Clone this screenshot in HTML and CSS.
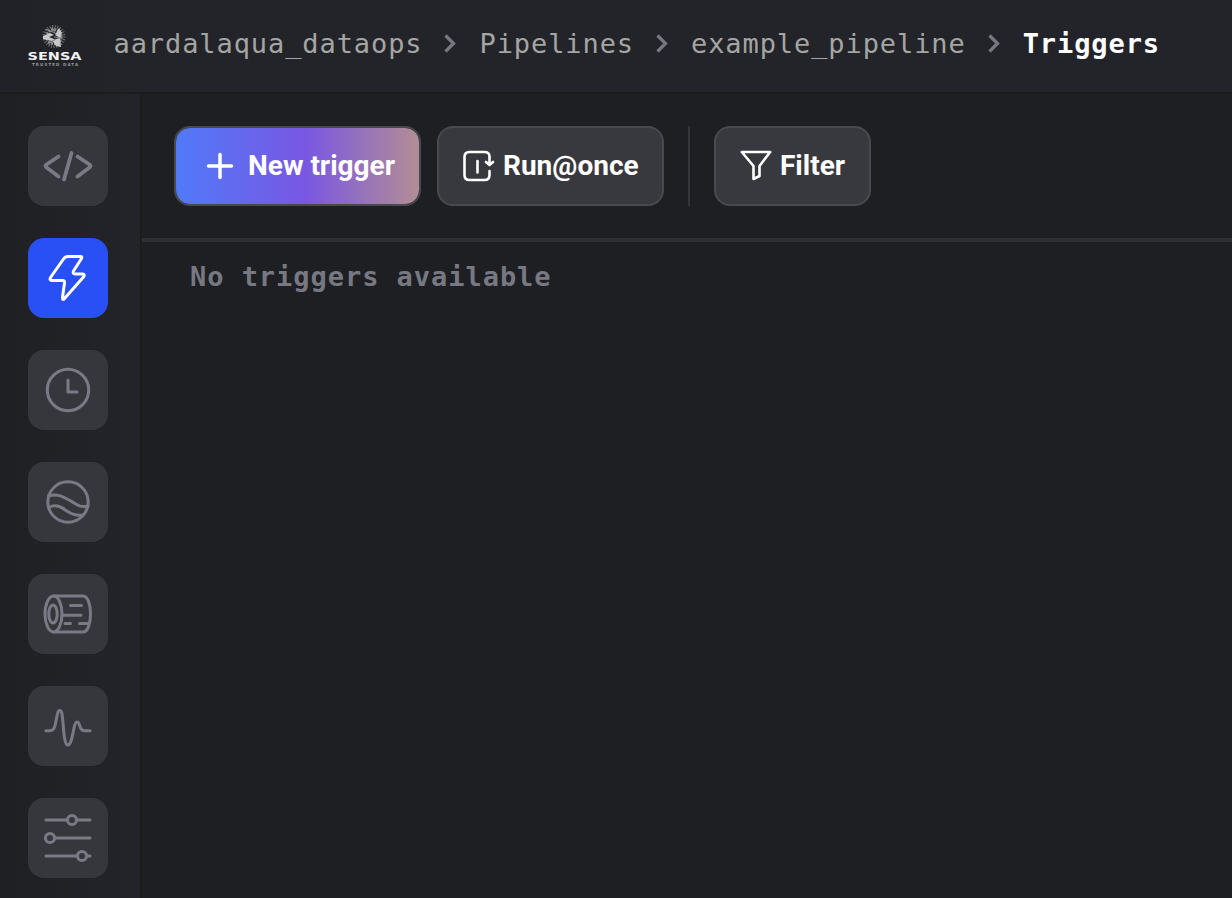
FILE: index.html
```html
<!DOCTYPE html>
<html lang="en">
<head>
<meta charset="utf-8">
<title>Triggers</title>
<link rel="stylesheet" href="styles.css">
</head>
<body>
<header class="topbar">
  <svg class="logo" width="56" height="44" viewBox="0 0 56 44" fill="none">
    <circle cx="26" cy="12.5" r="10" stroke="#6c6f72" stroke-width="3" stroke-dasharray="1 1.5"/>
    <circle cx="26" cy="12.5" r="7" stroke="#8f9193" stroke-width="3" stroke-dasharray="2 1"/>
    <path d="M15 12l7-3 4 2-5 2 5 2-2 2-9-2zM31 4l3 5-2 5-5-3zM24 16l8-2 1 9-5-1z" fill="#c6c7c7"/>
    <path d="M18 5l9 4M24 3l4 8M34 14l-8-1M20 20l8-5" stroke="#8b8d8f"/>
    <text x="-.5" y="35.5" class="logo-name" textLength="54" lengthAdjust="spacingAndGlyphs">SENSA</text>
    <text x="4" y="41.5" class="logo-tag" textLength="46" lengthAdjust="spacing">TRUSTED DATA</text>
  </svg>
  <nav class="crumbs">
    <span class="crumb">aardalaqua_dataops</span>
    <svg class="sep" width="57" height="24" viewBox="0 0 57 24"><path d="M23.500 3.500l8 8-8 8"/></svg>
    <span class="crumb">Pipelines</span>
    <svg class="sep" width="57" height="24" viewBox="0 0 57 24"><path d="M23.500 3.500l8 8-8 8"/></svg>
    <span class="crumb">example_pipeline</span>
    <svg class="sep" width="57" height="24" viewBox="0 0 57 24"><path d="M23.500 3.500l8 8-8 8"/></svg>
    <span class="crumb current">Triggers</span>
  </nav>
</header>
<div class="body">
  <aside class="sidebar">
    <a class="tile"><svg viewBox="0 0 80 80"><path d="M30.500 30.500L18.500 38.500Q16.500 40 18.500 41.500L30.500 50.500M49.500 30.500L61.500 38.500Q63.500 40 61.500 41.500L49.500 50.500M43.500 27L36 53.500"/></svg></a>
    <a class="tile active"><svg viewBox="0 0 80 80"><path d="M40 18.500H52.500Q54.500 18.500 53.500 20.500L45.500 33Q44.300 35.800 47 36H54.500Q57.500 36.300 55.500 39L36.500 60.500Q34.500 63 34.500 59.500L36.500 45Q37 42.500 34.500 42.500H24Q21 42 22.500 39.500L35.500 21Q37.200 18.500 40 18.500z"/></svg></a>
    <a class="tile"><svg viewBox="0 0 80 80"><circle cx="40" cy="40" r="20.700"/><path d="M40 30V42H49"/></svg></a>
    <a class="tile"><svg viewBox="0 0 80 80"><circle cx="40" cy="40" r="20.200"/><path d="M20.500 34C29 31 36 35 42 38.500C49 43 53 46 60 44M21 45.500C27 42 33 44.500 38 48.500C44 52.500 49 54 55 53"/></svg></a>
    <a class="tile"><svg viewBox="0 0 80 80"><ellipse cx="25.500" cy="40" rx="8.500" ry="18"/><ellipse cx="25" cy="40" rx="4.200" ry="9"/><path d="M25.500 22H55C60 22 62.500 31 62.500 40S60 58 55 58H25.500M42.500 31.500H53.500M34 41.300H53M37 49.500H42.500M51.500 49.500H60"/></svg></a>
    <a class="tile"><svg viewBox="0 0 80 80"><path d="M18 44.700H22C26 44.700 27 41 28 35C29.500 27 30 24.500 31.800 24.500C34 24.500 34.300 29 35 37C36 50 37 59 39.800 59C43 59 44.500 50 46 42C47 37 48 36 49.200 36C51 36 51.500 39 52.500 42C53.300 44 55 44.700 57 44.700H62"/></svg></a>
    <a class="tile"><svg viewBox="0 0 80 80"><path d="M18 22H39M49 22H62M27 40H62M18 58H49M59 58H62"/><circle cx="44" cy="22" r="4.600"/><circle cx="22" cy="40" r="4.600"/><circle cx="54" cy="58" r="4.600"/></svg></a>
  </aside>
  <main class="main">
    <div class="toolbar">
      <button class="btn primary"><svg width="28" height="28" viewBox="0 0 28 28"><path d="M14 2.500V25.500M2.500 14H25.500"/></svg><span>New trigger</span></button>
      <button class="btn run"><svg width="32" height="32" viewBox="0 0 32 32"><path d="M26.500 12.500V6.500Q26.500 2 21.500 2H6.500Q1.500 2 1.500 7V25Q1.500 30 6.500 30H21.500Q26.500 30 26.500 25V21M23 12l3.500 3 3.500-3M14.500 11V22.500"/></svg><span>Run@once</span></button>
      <i class="divider"></i>
      <button class="btn filter"><svg width="32" height="32" viewBox="0 0 32 32"><path d="M1.800 2H30.200L19.500 16V26L13.500 29V16z"/></svg><span>Filter</span></button>
    </div>
    <p class="empty">No triggers available</p>
  </main>
</div>
</body>
</html>
```
FILE: styles.css
```css
* { box-sizing: border-box; }
body {
  margin: 0;
  height: 898px;
  overflow: hidden;
  display: flex;
  flex-direction: column;
  background: #1e1f23;
  font-family: Roboto, sans-serif;
}
.topbar {
  height: 94px;
  flex: none;
  display: flex;
  align-items: flex-start;
  padding: 24px 0 0 28px;
  background: linear-gradient(90deg, #212227, #232429 140px);
  border-bottom: 2px solid #1b1c1e;
}
.logo { flex: none; margin-right: 29.500px; overflow: visible; }
.logo-name { font: 700 10px "DejaVu Sans", sans-serif; fill: #f2f2f2; }
.logo-tag { font: 700 4px "DejaVu Sans", sans-serif; fill: #97999b; }
.crumbs { display: flex; align-items: center; height: 40px; }
.crumb, .empty {
  font-family: "DejaVu Sans Mono", monospace;
  font-size: 27px;
  line-height: 40px;
  letter-spacing: .91px;
  white-space: pre;
}
.crumb { color: #a5a5a3; }
.current { color: #fff; font-weight: 700; }
.sep { flex: none; fill: none; stroke: #777882; stroke-width: 3.200; }
.body { flex: 1; display: flex; min-height: 0; }
.sidebar {
  width: 142px;
  flex: none;
  padding: 32px 0 0 28px;
  display: flex;
  flex-direction: column;
  gap: 32px;
  background: linear-gradient(90deg, #1f2024, #232429);
  border-right: 2px solid #1b1c1e;
}
.tile {
  display: block;
  width: 80px;
  height: 80px;
  flex: none;
  border-radius: 16px;
  background: #36373c;
}
.tile svg {
  display: block;
  fill: none;
  stroke: #797a85;
  stroke-width: 3;
  stroke-linecap: round;
  stroke-linejoin: round;
}
.tile:first-child svg { stroke-width: 3.800; }
.active { background: #2950f5; }
.active svg { stroke: #fff; }
.main { flex: 1; }
.toolbar {
  height: 148px;
  padding: 32px;
  display: flex;
  border-bottom: 4px solid #2e2f34;
}
.btn {
  height: 80px;
  padding: 0;
  display: flex;
  align-items: center;
  border: 2px solid #494a50;
  border-radius: 16px;
  background: #38393e;
  color: #fff;
  font: 700 28px/32px Roboto, sans-serif;
  white-space: nowrap;
}
.btn svg {
  flex: none;
  fill: none;
  stroke: #fff;
  stroke-width: 2.600;
  stroke-linecap: round;
  stroke-linejoin: round;
}
.primary {
  width: 247px;
  padding-left: 30px;
  gap: 14px;
  background: linear-gradient(90deg, #507af9, #7957e3 53%, #b38d94) padding-box;
}
.primary svg { stroke-width: 3.500; }
.run { width: 227px; margin-left: 16px; padding-left: 24px; gap: 8px; }
.divider { width: 2px; height: 80px; margin: 0 24px; background: #35363b; }
.filter { width: 157px; padding-left: 24px; gap: 8px; }
.empty { margin: 15px 0 0 48px; color: #777882; font-weight: 700; letter-spacing: .96px; }
```
